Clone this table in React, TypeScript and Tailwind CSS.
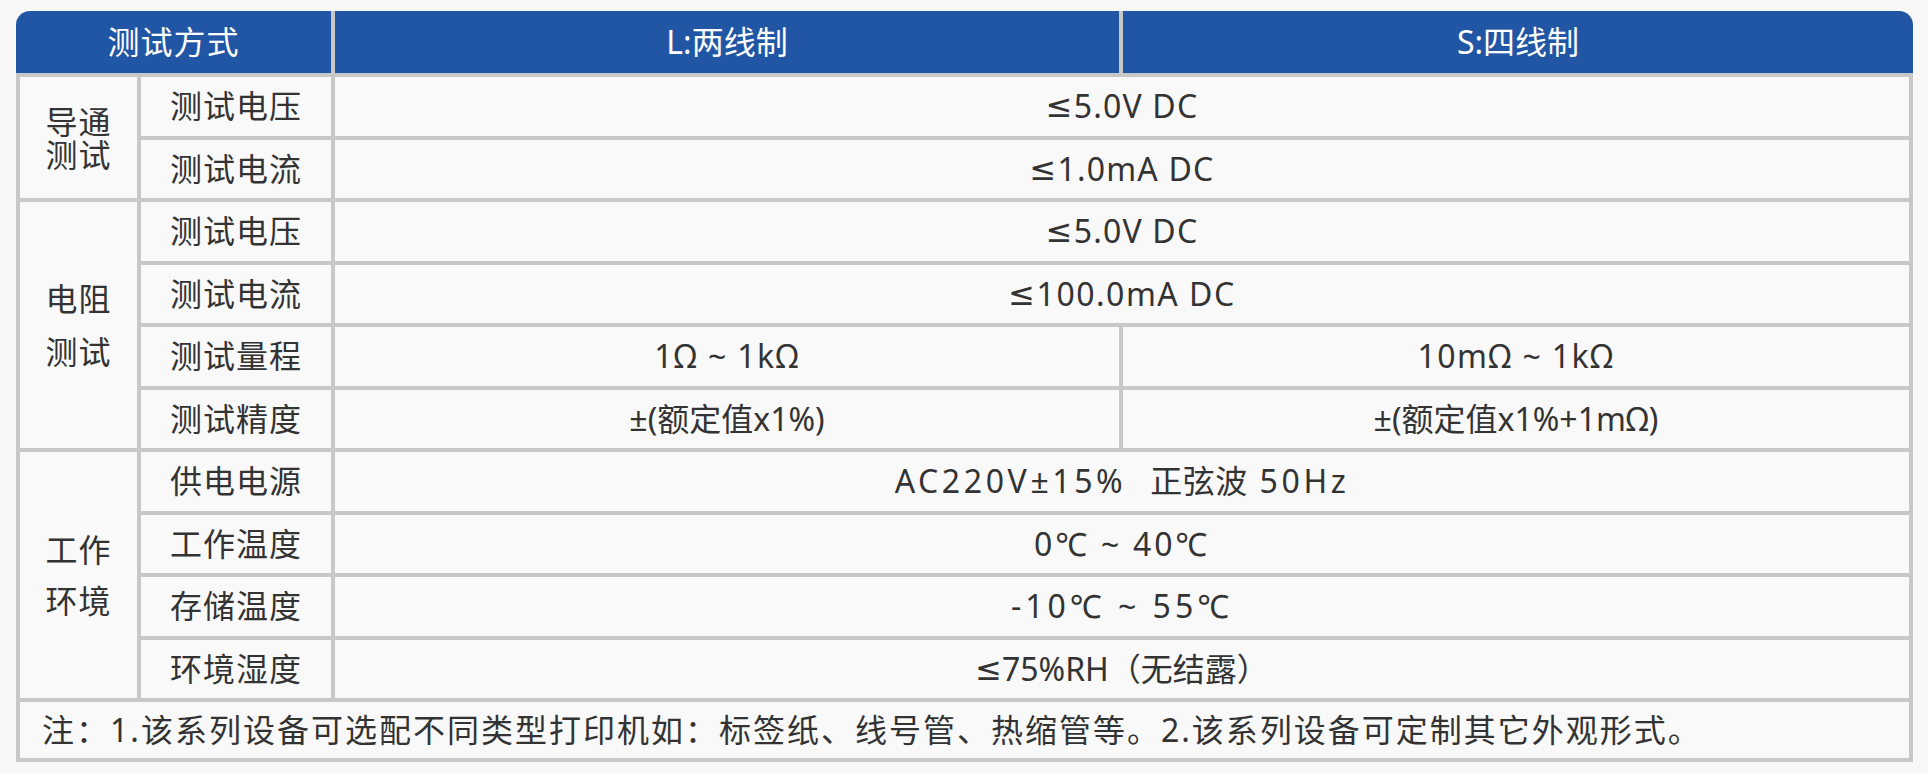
import type { ReactNode } from 'react'

function Label({ children }: { children: ReactNode }) {
  return (
    <div className="flex items-center justify-center bg-[#f9f9f9] text-[32px] tracking-[1px]">
      {children}
    </div>
  )
}

function Value({
  children,
  wide,
  spacing = 'tracking-[1.2px]',
}: {
  children: ReactNode
  wide?: boolean
  spacing?: string
}) {
  return (
    <div
      className={`flex items-center justify-center whitespace-pre bg-[#f9f9f9] text-[32px] ${spacing} ${
        wide ? 'col-span-2' : ''
      }`}
    >
      {children}
    </div>
  )
}

function Le() {
  return <span className="font-['DejaVu_Sans',sans-serif]">≤</span>
}

export default function App() {
  return (
    <div className="min-h-screen bg-[#f8f8f8] pt-[11px] pl-[16px] font-['Noto_Sans','Noto_Sans_CJK_SC',sans-serif] text-[#333]">
      <div className="w-[1897px]">
        <div className="flex h-[62px] overflow-hidden rounded-t-[14px] bg-[#2156a5] text-[32px] text-white">
          <div className="flex w-[315px] items-center justify-center tracking-[1px]">测试方式</div>
          <div className="w-[4px] bg-[#c8c8c8]" />
          <div className="flex w-[784px] items-center justify-center">L:两线制</div>
          <div className="w-[4px] bg-[#c8c8c8]" />
          <div className="flex flex-1 items-center justify-center">S:四线制</div>
        </div>

        <div className="grid grid-cols-[117px_190px_784px_786px] grid-rows-[repeat(10,58.5px)_56px] gap-[4px] bg-[#c8c8c8] p-[4px]">
          <div className="row-span-2 flex flex-col items-center justify-center bg-[#f9f9f9] text-[32px] leading-[33px] tracking-[1px]">
            <span>导通</span>
            <span>测试</span>
          </div>
          <Label>测试电压</Label>
          <Value wide>
            <Le />5.0V DC
          </Value>
          <Label>测试电流</Label>
          <Value wide>
            <Le />1.0mA DC
          </Value>

          <div className="row-span-4 flex flex-col items-center justify-center gap-[21px] bg-[#f9f9f9] text-[32px] leading-[32px] tracking-[1px]">
            <span>电阻</span>
            <span>测试</span>
          </div>
          <Label>测试电压</Label>
          <Value wide>
            <Le />5.0V DC
          </Value>
          <Label>测试电流</Label>
          <Value wide spacing="tracking-[1.5px]">
            <Le />100.0mA DC
          </Value>
          <Label>测试量程</Label>
          <Value spacing="tracking-[1.4px]">1Ω ~ 1kΩ</Value>
          <Value spacing="tracking-[1.4px]">10mΩ ~ 1kΩ</Value>
          <Label>测试精度</Label>
          <Value spacing="tracking-[0px]">±(额定值x1%)</Value>
          <Value spacing="tracking-[0px]">±(额定值x1%+1mΩ)</Value>

          <div className="row-span-4 flex flex-col items-center justify-center gap-[19px] bg-[#f9f9f9] text-[32px] leading-[32px] tracking-[1px]">
            <span>工作</span>
            <span>环境</span>
          </div>
          <Label>供电电源</Label>
          <Value wide spacing="tracking-[3.6px]">
            AC220V±15%  <span className="tracking-[0.5px]">正弦波</span> 50Hz
          </Value>
          <Label>工作温度</Label>
          <Value wide spacing="tracking-[2.8px]">0℃ ~ 40℃</Value>
          <Label>存储温度</Label>
          <Value wide spacing="tracking-[4px]">-10℃ ~ 55℃</Value>
          <Label>环境湿度</Label>
          <Value wide spacing="tracking-[0px]">
            <Le />75%RH（无结露）
          </Value>

          <div className="col-span-4 flex items-center bg-[#f9f9f9] pl-[22px] text-[32px] tracking-[2px]">
            注：1.该系列设备可选配不同类型打印机如：标签纸、线号管、热缩管等。2.该系列设备可定制其它外观形式。
          </div>
        </div>
      </div>
    </div>
  )
}
